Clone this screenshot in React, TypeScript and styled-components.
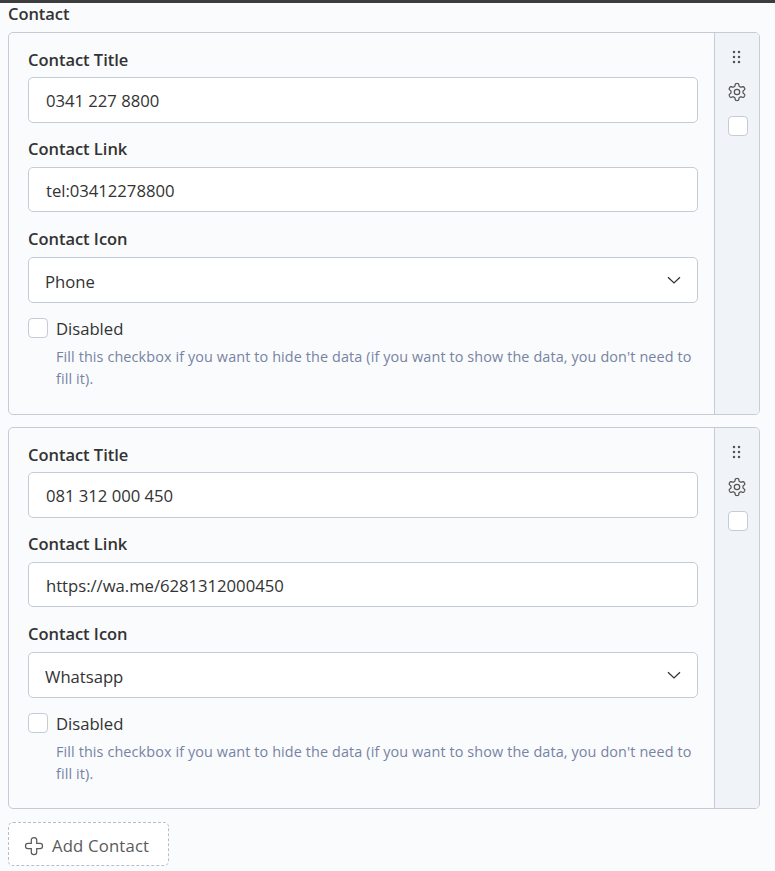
import React from "react";
import styled, { createGlobalStyle } from "styled-components";

const GlobalStyle = createGlobalStyle`
  *, *::before, *::after { box-sizing: border-box; }
  body {
    margin: 0;
    background: #fafbfd;
    color: #333333;
    font-family: "Open Sans", "Noto Sans", sans-serif;
    font-size: 16.7px;
    line-height: 24px;
  }
`;

const Page = styled.main`
  height: 871px;
  overflow: hidden;
  border-top: 3px solid #3d3d3d;
  padding: 0 15px 0 8px;
`;

const Heading = styled.div`
  height: 29px;
  line-height: 22px;
  font-size: 16.5px;
  font-weight: 600;
  letter-spacing: -0.05px;
`;

const Card = styled.section<{ $height: number }>`
  display: flex;
  height: ${(p) => p.$height}px;
  margin-bottom: 12px;
  border: 1px solid #c4ccd7;
  border-radius: 5px;
  overflow: hidden;
`;

const Fields = styled.div`
  flex: 1;
  min-width: 0;
  padding: 15px 16px 0 19px;
`;

const Tools = styled.aside`
  display: flex;
  flex-direction: column;
  align-items: center;
  width: 45px;
  padding: 15px 0 0 1px;
  border-left: 1px solid #c4ccd7;
  background: #f0f3f8;
  color: #555555;

  svg { display: block; }
`;

const ToolIcon = styled.span<{ $gap: number }>`
  display: grid;
  place-items: center;
  width: 20px;
  height: 18px;
  margin: 0 2px ${(p) => p.$gap}px 0;
`;

const Label = styled.label`
  display: block;
  height: 29px;
  line-height: 21px;
  font-size: 16.5px;
  font-weight: 600;
  letter-spacing: -0.03px;

  &:first-child { line-height: 23px; }
`;

const Control = styled.div<{ $height: number; $gap: number; $select?: boolean }>`
  display: flex;
  align-items: center;
  justify-content: space-between;
  height: ${(p) => p.$height}px;
  margin-bottom: ${(p) => p.$gap}px;
  padding: ${(p) => (p.$select ? "4px 16px 0 16px" : "2px 16px 0 17px")};
  border: 1px solid #c4ccd7;
  border-radius: 5px;
  background: #ffffff;

  svg { margin-bottom: 4px; }
`;

const Value = styled.span`
  letter-spacing: -0.03px;
`;

const CheckRow = styled.div`
  display: flex;
  gap: 8px;
`;

const CheckBox = styled.span`
  flex: none;
  width: 20px;
  height: 20px;
  border: 1px solid #c4ccd7;
  border-radius: 4px;
  background: #ffffff;
`;

const CheckText = styled.div`
  flex: 1;
  line-height: 21px;
`;

const Help = styled.div`
  margin-top: 7px;
  color: #7783a3;
  font-size: 14.4px;
  line-height: 22px;
  letter-spacing: 0.115px;
  white-space: nowrap;
`;

const AddButton = styled.button`
  display: flex;
  align-items: center;
  gap: 8px;
  width: 161px;
  height: 44px;
  margin-top: 13px;
  padding: 4px 0 0 15px;
  border: 1px dashed #b9bec6;
  border-radius: 5px;
  background: #ffffff;
  color: #5b5b5b;
  font: inherit;
  letter-spacing: 0.18px;
  white-space: nowrap;
`;

const DragIcon = () => (
  <svg width="10" height="14" viewBox="0 0 10 14" fill="currentColor">
    {[2, 7].map((x) =>
      [2, 7, 12].map((y) => <circle key={`${x}-${y}`} cx={x} cy={y} r="1.25" />)
    )}
  </svg>
);

// Six-toothed outline: the radius swings between root and tip with softened corners.
const gearPoints = Array.from({ length: 120 }, (_, i) => {
  const angle = (i / 120) * Math.PI * 2;
  const radius = 7.25 + 1.3 * Math.tanh(2.2 * Math.cos(6 * angle));
  return `${(10 + radius * Math.sin(angle)).toFixed(2)},${(10 - radius * Math.cos(angle)).toFixed(2)}`;
}).join(" ");

const GearIcon = () => (
  <svg width="20" height="18" viewBox="0 1 20 18" overflow="visible" fill="none" stroke="currentColor" strokeWidth="1.25" strokeLinejoin="round">
    <polygon points={gearPoints} />
    <circle cx="10" cy="10" r="2.7" />
  </svg>
);

const ChevronIcon = () => (
  <svg width="14" height="8" viewBox="0 0 14 8" fill="none" stroke="#333333" strokeWidth="1.3">
    <path d="M1 1.300l6 5.600L13 1.300" />
  </svg>
);

const PlusIcon = () => (
  <svg width="20" height="20" viewBox="0 0 20 20" fill="none" stroke="currentColor" strokeWidth="1.25">
    <path d="M10 1.500a2.700 2.300 0 0 1 2.700 2.300v3.500h3.500a2.300 2.700 0 0 1 0 5.400h-3.500v3.500a2.700 2.300 0 0 1-5.400 0v-3.500H3.800a2.300 2.700 0 0 1 0-5.400h3.500V3.800A2.700 2.300 0 0 1 10 1.500z" />
  </svg>
);

type Contact = { title: string; link: string; icon: string; height: number };

const contacts: Contact[] = [
  { title: "0341 227 8800", link: "tel:03412278800", icon: "Phone", height: 383 },
  { title: "081 312 000 450", link: "https://wa.me/6281312000450", icon: "Whatsapp", height: 382 },
];

const ContactCard = ({ contact }: { contact: Contact }) => (
  <Card $height={contact.height}>
    <Fields>
      <Label>Contact Title</Label>
      <Control $height={46} $gap={15}><Value>{contact.title}</Value></Control>
      <Label>Contact Link</Label>
      <Control $height={45} $gap={16}><Value>{contact.link}</Value></Control>
      <Label>Contact Icon</Label>
      <Control $height={46} $gap={15} $select>
        <Value>{contact.icon}</Value>
        <ChevronIcon />
      </Control>
      <CheckRow>
        <CheckBox />
        <CheckText>
          <Value>Disabled</Value>
          <Help>
            Fill this checkbox if you want to hide the data (if you want to show the data, you don't need to
            <br />
            fill it).
          </Help>
        </CheckText>
      </CheckRow>
    </Fields>
    <Tools>
      <ToolIcon $gap={17}><DragIcon /></ToolIcon>
      <ToolIcon $gap={15}><GearIcon /></ToolIcon>
      <CheckBox />
    </Tools>
  </Card>
);

export default function App() {
  return (
    <>
      <GlobalStyle />
      <Page>
        <Heading>Contact</Heading>
        {contacts.map((c) => <ContactCard key={c.title} contact={c} />)}
        <AddButton>
          <PlusIcon />
          <span>Add Contact</span>
        </AddButton>
      </Page>
    </>
  );
}
